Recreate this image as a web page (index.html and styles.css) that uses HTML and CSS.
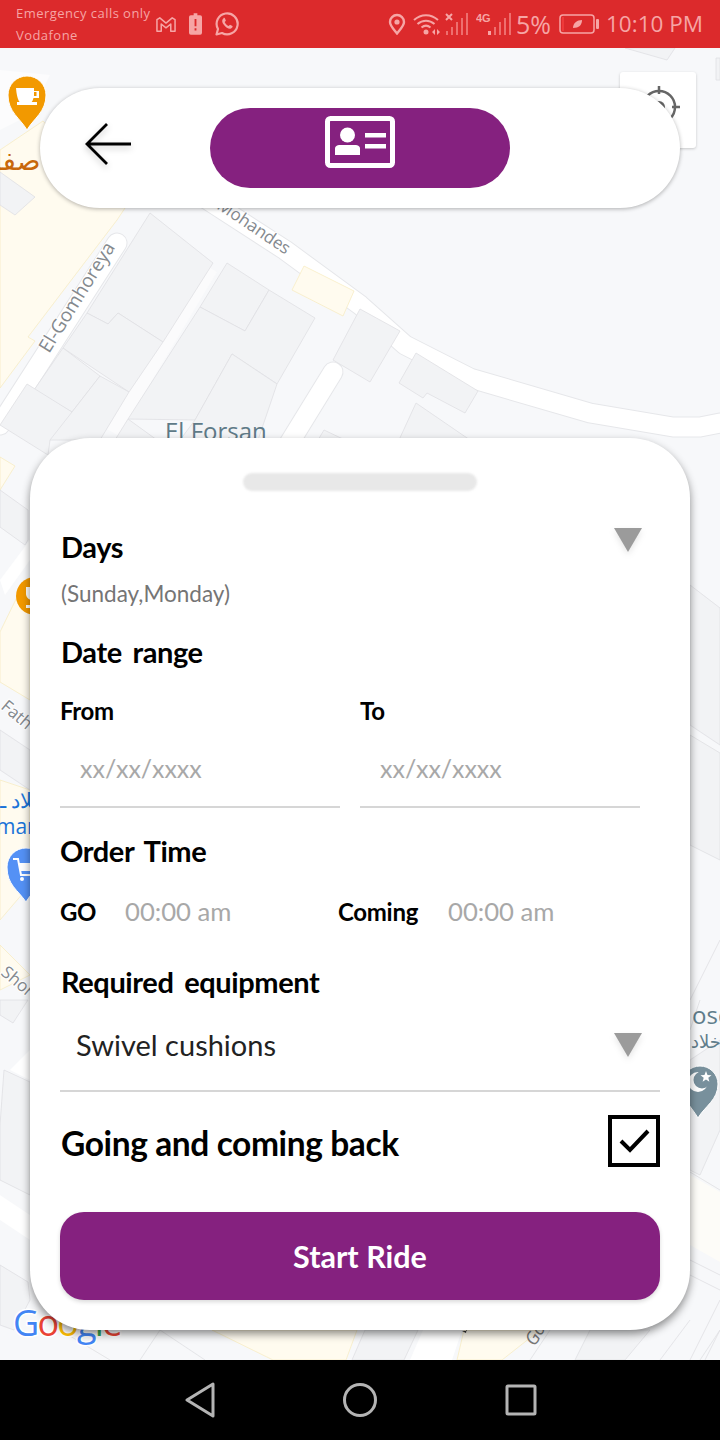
FILE: index.html
```html
<!DOCTYPE html>
<html lang="en">
<head>
<meta charset="utf-8">
<title>Start Ride</title>
<link rel="stylesheet" href="styles.css">
</head>
<body>
<div class="screen">
  <header class="status">
    <div class="carrier"><span>Emergency calls only</span><span>Vodafone</span></div>
    <div class="status-left-icons">
      <svg width="20" height="17" viewBox="0 0 21 17"><path d="M1 3.500 4 1.500 10.500 7 17 1.500 20 3.500V15.500H15.500V8L10.500 12 5.500 8V15.500H1z" fill="none" stroke="#f6a5a5" stroke-width="1.600" stroke-linejoin="round"/></svg>
      <svg width="13" height="22" viewBox="0 0 14 23"><path d="M5 0h4v2h3a2 2 0 0 1 2 2v17a2 2 0 0 1-2 2H2a2 2 0 0 1-2-2V4a2 2 0 0 1 2-2h3z" fill="#f6a5a5"/><path d="M6 6h2v8H6zM6 16h2v2.500H6z" fill="#dc2a2c"/></svg>
      <svg width="24" height="24" viewBox="0 0 24 24"><path d="M1.500 22.500 3 17A10.500 10.500 0 1 1 7 21z" fill="none" stroke="#f6a5a5" stroke-width="2.200" stroke-linejoin="round"/><path d="M8.500 6.500c-2 1.500-1.500 4 .5 6.500s5 4.500 7 3.500c1.500-.8 1.800-2 1.500-2.500l-2.500-1.300-1.300 1.300c-1.500-.5-3.500-2.500-4-4l1.200-1.300-1-2.500c-.5-.4-1.200-.4-1.400-.2z" fill="#f6a5a5"/></svg>
    </div>
    <div class="status-right">
      <svg width="18" height="22" viewBox="0 0 18 22"><path d="M9 20.500C5 15.500 2 12.500 2 9a7 7 0 0 1 14 0c0 3.500-3 6.500-7 11.500z" fill="none" stroke="#f6a5a5" stroke-width="2.400"/><circle cx="9" cy="9" r="2.600" fill="#f6a5a5"/></svg>
      <svg class="wifi" width="28" height="22" viewBox="0 0 28 22"><g fill="none" stroke="#f6a5a5" stroke-width="2"><path d="M1 7c7-6.500 17-6.500 24 0"/><path d="M4.500 11c5-4.500 12-4.500 17 0"/><path d="M8.500 14.500c3-2.500 6-2.500 9 0"/></g><circle cx="13" cy="19" r="2.500" fill="#f6a5a5"/><path d="M19 19l3-3v6zM24 16l3 3-3 3z" fill="#f6a5a5"/></svg>
      <svg width="24" height="24" viewBox="0 0 24 24"><path d="M1 2l6 6M7 2 1 8" stroke="#f6a5a5" stroke-width="2"/><path d="M1 19h2v4H1zM6 15h2v8H6zM11 10h2v13h-2zM16 6h2v17h-2zM21 1h2v22h-2z" fill="#ee6f6f"/></svg>
      <svg class="net" width="36" height="24" viewBox="0 0 36 24"><text x="0" y="10" class="tiny">4G</text><path d="M12 19h3v4h-3z" fill="#f6a5a5"/><path d="M18 15h2v8h-2zM23 10h2v13h-2zM28 6h2v17h-2zM33 1h2v22h-2z" fill="#ee6f6f"/></svg>
      <span class="pct">5%</span>
      <svg class="batt" width="40" height="20" viewBox="0 0 40 20"><rect x="1" y="1" width="34" height="18" rx="3" fill="none" stroke="#f6a5a5" stroke-width="1.500"/><path d="M3 3h2v14H3z" fill="#ee3a3a"/><path d="M14 14c0-5 4-8 9-8 0 5-3 8-9 8z" fill="#f6a5a5"/><rect x="37" y="5" width="3" height="10" rx="1" fill="#f6a5a5"/></svg>
      <span class="clock">10:10 PM</span>
    </div>
  </header>

  <main class="map">
    <svg class="map-art" width="720" height="1312" viewBox="0 48 720 1312">
      <rect x="0" y="48" width="720" height="1312" fill="#f7f8fa"/>
      <path class="bld" d="M625 48h50l-8 12-42-12zM716 58h4v22h-4z"/>
      <path d="M0 70l50 5-20 40-30 15z" fill="#fcfcfd"/>
      <path class="ylw" d="M43 121 125 208 117 220 28 337 35 341 0 388V150z"/>
      <path class="bld" d="M0 172l35 25-20 18-15-10z"/>
      <path class="road" d="M0 425 117 243"/><path class="road-in" d="M0 425 117 243"/>
      <path class="lane" d="M210 268 112 432"/>
      <path class="road" d="M200 195 285 250 360 305 405 345 470 378 590 413 673 427 700 427 720 423"/><path class="road-in" d="M200 195 285 250 360 305 405 345 470 378 590 413 673 427 700 427 720 423"/>
      <path class="road" d="M333 372 285 450"/><path class="road-in" d="M333 372 285 450"/>
      <path class="bld" d="M150 213 213 263 163 342 118 313 108 324 87 313z"/>
      <path class="bld" d="M87 313 108 324 118 313 163 342 129 392 63 348z"/>
      <path class="bld" d="M63 348 100 376 72 412 34 390z"/>
      <path class="bld" d="M100 376 129 392 100 440H50L34 420 72 412z"/>
      <path class="bld" d="M27 384 72 412 50 440 48 455 0 425z"/>
      <path class="bld" d="M227 263 269 290 245 331 200 307z"/>
      <path class="bld" d="M200 307 245 331 269 290 315 318 277 384 232 354 195 420 128 419z"/>
      <path class="bld" d="M232 354 277 384 258 440H180L195 420z"/>
      <path class="bld" d="M128 419 157 440H115z"/>
      <path class="bld" d="M324 430 345 440H318z"/>
      <path class="bld" d="M360 309 400 331 370 382 333 360z"/>
      <path class="bld" d="M416 353 478 391 465 413 427 393 423 398 399 383z"/>
      <path class="bld" d="M416 403 470 440H399z"/>
      <path class="ylw" d="M304 266 354 291 343 316 292 290z"/>

      <!-- left edge -->
      <path class="ylw" d="M0 457 15 466 0 490zM18 595 30 600V700L0 682V632zM0 780 30 790V885L0 920zM0 945 30 975 0 990z"/>
      <path class="bld" d="M0 490 28 510V540L25 545 0 527zM0 730 30 750V790L0 770z"/>
      <path d="M0 580 30 540V560L5 595z" fill="#fff"/>
      <path class="bld" d="M0 1000H28L13 1023 0 1015z"/>
      <path d="M10 1070 30 1050V1080z" fill="#fff"/>
      <path class="bld" d="M4 1070 30 1082V1195L0 1180V1125z"/>
      <path d="M0 1195 30 1215V1240L0 1220z" fill="#fff"/>
      <path class="bld" d="M0 1265 28 1282 30 1300 14 1330 0 1325z"/>

      <!-- right edge -->
      <path class="bld" d="M690 585 720 608V745L690 725zM690 735 720 753V860L690 845z"/>
      <path class="lane-out" d="M690 1000 720 940M700 1000 690 1030"/>
      <path class="bld" d="M690 1060 720 1040V1130L700 1175 690 1170z"/>
      <path class="pale" d="M690 1175 720 1192V1262L690 1245z"/>
      <path class="lane-out" d="M690 1172 720 1190M690 1260 720 1275M690 1275 720 1290M690 1360 720 1300M705 1360 720 1330"/>

      <!-- bottom edge -->
      <path class="ylw" d="M212 1330H357L346 1360H273z"/>
      <path class="lane-out" d="M160 1330 205 1360M140 1360 160 1330M60 1330 110 1360"/>
      <path class="bld" d="M365 1330H418L404 1360H352z"/>
      <path class="ylw" d="M464 1330H540L502 1360H457z"/>
      <path d="M423 1330H462L452 1360H410z" fill="#fff"/>
      <path class="bld" d="M590 1330H650L625 1360H575z"/>
      <path class="lane-out" d="M530 1360 550 1330M660 1360 690 1320M700 1360 720 1330"/>
      <path d="M462 1331h5v-4l-1 6z" fill="#333"/>

      <text class="lbl gom" transform="translate(49 354) rotate(-58)">El-Gomhoreya</text>
      <text class="lbl" transform="translate(216 208) rotate(34)">Mohandes</text>
      <text class="lbl-big" x="165" y="440">El Forsan</text>
      <text class="lbl" transform="translate(0 708) rotate(40)">Fath</text>
      <text class="lbl" transform="translate(0 974) rotate(40)">Shor</text>
      <text class="lbl-blue" x="0" y="808">ـلاد ـ</text>
      <text class="lbl-blue" x="-4" y="834">mark</text>
      <text class="lbl-teal" x="692" y="1024">osc</text>
      <text class="lbl-teal-ar" x="691" y="1048">خلاد</text>
      <text class="lbl-ar" x="-6" y="170">صفا</text>
      <g>
        <path d="M27 130C20 118 8 112 8 95a19 19 0 0 1 38 0c0 17-12 23-19 35z" fill="#f29900" stroke="#fff" stroke-width="1"/>
        <path d="M16 88h18v3h5v7h-5.500c-1 4-3 6-6 6h-4c-4 0-6.500-4-7.500-16zM34 92v4h2.500v-4z" fill="#fff" fill-rule="evenodd"/>
        <rect x="17" y="102" width="20" height="3" fill="#fff"/>
      </g>
      <circle cx="35" cy="596" r="19" fill="#f29900"/>
      <path d="M26 587h18v7c0 4-3 6-6 6h-6c-3 0-6-3-6-6zM26 605h18v3H26z" fill="#fff"/>
      <g>
        <path d="M26 902C18 890 7 885 7 867a19 19 0 0 1 38 0c0 18-12 23-19 35z" fill="#5491f5" stroke="#fff" stroke-width="1"/>
        <path d="M13 859h5l3 16h14" fill="none" stroke="#fff" stroke-width="2"/><path d="M19 863h16v8H20z" fill="#fff"/><circle cx="22" cy="879" r="2" fill="#fff"/>
      </g>
      <g>
        <path d="M698 1118C691 1106 682 1100 682 1084a18 18 0 0 1 36 0c0 16-13 22-20 34z" fill="#78909c" stroke="#fff" stroke-width="1"/>
        <circle cx="698" cy="1082" r="10" fill="#fff"/><circle cx="702" cy="1080" r="8.500" fill="#78909c"/>
        <path d="M706 1071l1.500 4 4 .2-3.200 2.500 1.100 4-3.400-2.300-3.400 2.300 1.100-4-3.200-2.500 4-.2z" fill="#fff"/>
      </g>
      <text class="lbl-go" transform="translate(535 1347) rotate(-60)">Go</text>
      <text class="google" x="13" y="1336"><tspan fill="#4285f4">G</tspan><tspan fill="#ea4335">o</tspan><tspan fill="#fbbc05">o</tspan><tspan fill="#4285f4">g</tspan><tspan fill="#34a853">l</tspan><tspan fill="#ea4335">e</tspan></text>
    </svg>

    <div class="locate">
      <svg width="60" height="60" viewBox="0 0 60 60"><g fill="none" stroke="#666" stroke-width="2.500"><circle cx="29" cy="29" r="16"/><path d="M29 8v8M29 42v8M8 29h8M42 29h8"/></g><circle cx="29" cy="29" r="6" fill="#666"/></svg>
    </div>

    <div class="topbar">
      <svg class="back" width="50" height="44" viewBox="0 0 50 44"><path d="M47 22H3M23 2 3 22l20 20" fill="none" stroke="#000" stroke-width="2.800"/></svg>
      <div class="id-pill">
        <svg width="70" height="52" viewBox="0 0 70 52"><rect x="2.500" y="2.500" width="65" height="47" rx="3" fill="none" stroke="#fff" stroke-width="5"/><circle cx="22.500" cy="19" r="7.500" fill="#fff"/><path d="M10 39v-6c0-3 2-4 5-4h15c3 0 5 1 5 4v6z" fill="#fff"/><path d="M40 17h21v4.500H40zM40 28h21v4.500H40z" fill="#fff"/></svg>
      </div>
    </div>

    <section class="sheet">
      <div class="handle"></div>
      <div class="row-between days">
        <h2 class="title">Days</h2>
        <span class="caret"></span>
      </div>
      <p class="sub">(Sunday,Monday)</p>
      <h2 class="title date-title">Date range</h2>
      <div class="dates">
        <div class="date-col">
          <span class="label">From</span>
          <div class="field">xx/xx/xxxx</div>
        </div>
        <div class="date-col">
          <span class="label">To</span>
          <div class="field">xx/xx/xxxx</div>
        </div>
      </div>
      <h2 class="title order-title">Order Time</h2>
      <div class="times">
        <span class="label go">GO</span><span class="hint go-hint">00:00 am</span>
        <span class="label coming">Coming</span><span class="hint">00:00 am</span>
      </div>
      <h2 class="title equip-title">Required equipment</h2>
      <div class="select">
        <span>Swivel cushions</span>
        <span class="caret"></span>
      </div>
      <div class="row-between round-trip">
        <span class="big">Going and coming back</span>
        <span class="check"><svg width="44" height="44" viewBox="0 0 44 44"><path d="M9 22l9 9 18-19" fill="none" stroke="#000" stroke-width="4"/></svg></span>
      </div>
      <button class="cta">Start Ride</button>
    </section>
  </main>

  <nav class="navbar">
    <svg width="30" height="36" viewBox="0 0 30 36"><path d="M28 2v32L2 18z" fill="none" stroke="#b4b4b4" stroke-width="3" stroke-linejoin="round"/></svg>
    <svg width="36" height="36" viewBox="0 0 36 36"><circle cx="18" cy="18" r="15.500" fill="none" stroke="#b4b4b4" stroke-width="3"/></svg>
    <svg width="32" height="32" viewBox="0 0 32 32"><rect x="2" y="2" width="28" height="28" rx="1" fill="none" stroke="#b4b4b4" stroke-width="3"/></svg>
  </nav>
</div>
</body>
</html>
```

FILE: styles.css
```css
* { box-sizing: border-box; }
html, body { margin: 0; padding: 0; }
body { width: 720px; height: 1440px; overflow: hidden; font-family: "Lato", "Noto Sans", sans-serif; color: #000; }
.screen { width: 720px; height: 1440px; display: flex; flex-direction: column; }

/* status bar */
.status { height: 48px; background: #dc2a2c; display: flex; align-items: center; padding: 0 17px 0 16px; color: #f6a5a5; flex: none; }
.carrier { display: flex; flex-direction: column; width: 140px; font-family: "Open Sans", sans-serif; font-size: 13px; line-height: 22px; letter-spacing: .45px; white-space: nowrap; }
.status-left-icons { display: flex; align-items: center; gap: 13px; }
.status-right { margin-left: auto; display: flex; align-items: center; gap: 4px; }
.wifi { margin-left: 3px; }
.net { margin-left: 3px; }
.batt { margin-left: 4px; }
.tiny { font: 700 11px "Liberation Sans", sans-serif; fill: #f6a5a5; }
.pct, .clock { font-family: "Open Sans", sans-serif; font-size: 22.500px; line-height: 28px; }
.pct { font-size: 25px; }
.clock { margin-left: 3px; }

/* map */
.map { position: relative; flex: 1; display: flex; flex-direction: column; justify-content: space-between; padding: 40px 30px 30px; overflow: hidden; }
.map-art { position: absolute; left: 0; top: 0; }
.bld { fill: #f2f3f5; stroke: #dfe0e3; stroke-width: .8; }
.ylw { fill: #fffbef; stroke: #f8ecc4; stroke-width: .8; }
.pale { fill: #fdfcf8; }
.road { fill: none; stroke: #e6e7ea; stroke-width: 21; stroke-linecap: round; stroke-linejoin: round; }
.road-in { fill: none; stroke: #fff; stroke-width: 19; stroke-linecap: round; stroke-linejoin: round; }
.lane { fill: none; stroke: #fbfbfc; stroke-width: 16; }
.lane-out { fill: none; stroke: #dfe0e3; stroke-width: .8; }
.lbl { font: 17px "Open Sans", sans-serif; fill: #84898e; stroke: #fff; stroke-width: 2px; paint-order: stroke; }
.gom { font-size: 19px; }
.lbl-big { font: 24px "Open Sans", sans-serif; fill: #5f7a87; }
.lbl-blue { font: 21px "Open Sans", "Noto Sans", sans-serif; fill: #1a73d8; }
.lbl-teal { font: 24px "Open Sans", sans-serif; fill: #607d8b; }
.lbl-teal-ar { font: 18px "DejaVu Sans", sans-serif; fill: #607d8b; }
.lbl-ar { font: 28px "DejaVu Sans", sans-serif; fill: #c8680a; }
.lbl-go { font: italic 18px "Open Sans", sans-serif; fill: #777; }
.google { font: 500 36px "Open Sans", sans-serif; letter-spacing: -1.800px; stroke: #fff; stroke-width: 3px; paint-order: stroke; }

.locate { position: absolute; left: 620px; top: 24px; width: 76px; height: 76px; background: #fff; border-radius: 3px; box-shadow: 0 1px 3px rgba(0,0,0,.2); padding: 6px 0 0 10px; }

.topbar { position: relative; height: 120px; margin: 0 10px; background: #fff; border-radius: 60px; box-shadow: 0 1px 4px rgba(0,0,0,.3); display: flex; align-items: center; padding-left: 44px; flex: none; }
.back { margin-top: -8px; filter: drop-shadow(0 3px 3px rgba(0,0,0,.2)); }
.id-pill { margin-left: 76px; width: 300px; height: 80px; border-radius: 40px; background: #85217f; display: flex; align-items: center; justify-content: center; padding-bottom: 12px; }

/* sheet */
.sheet { position: relative; height: 892px; background: #fff; border-radius: 60px; padding: 35px 30px 0; box-shadow: 0 4px 8px rgba(0,0,0,.45); flex: none; }
.handle { width: 234px; height: 18px; margin: 0 auto; border-radius: 9px; background: #e8e8e8; filter: blur(1px); }
.row-between { display: flex; align-items: center; justify-content: space-between; }
.title { margin: 0; font-size: 29px; line-height: 40px; font-weight: 700; padding-left: 1px; letter-spacing: -.4px; word-spacing: 4px; }
.days { margin-top: 36px; height: 40px; }
.caret { width: 0; height: 0; border-left: 14px solid transparent; border-right: 14px solid transparent; border-top: 24px solid #9b9b9b; margin-right: 18px; filter: drop-shadow(0 3px 3px rgba(0,0,0,.1)); }
.days .caret { margin-top: -14px; }
.sub { margin: 11px 0 0; font-size: 22.500px; line-height: 32px; color: #757575; padding-left: 1px; }
.date-title { margin-top: 22px; }
.dates { display: flex; gap: 20px; margin-top: 21px; width: 580px; }
.date-col { flex: 1; }
.label { display: block; font-size: 24px; line-height: 36px; font-weight: 700; letter-spacing: -.3px; }
.field { margin-top: 4px; height: 75px; padding: 13px 0 0 20px; line-height: 44px; font-size: 25px; color: #a8a8a8; border-bottom: 2px solid #d6d6d6; }
.order-title { margin-top: 23px; padding-left: 0; }
.times { display: flex; align-items: center; margin-top: 20px; height: 40px; }
.times .label { padding-top: 2px; }
.go { width: 65px; }
.hint { font-size: 25.700px; color: #a8a8a8; }
.go-hint { width: 213px; }
.coming { width: 110px; }
.equip-title { margin-top: 31px; }
.select { display: flex; align-items: center; justify-content: space-between; margin-top: 23px; height: 67px; padding: 0 0 25px 16px; font-size: 29px; color: #222; border-bottom: 2px solid #d6d6d6; }
.select span:first-child { margin-top: -2px; }
.round-trip { margin-top: 23px; height: 52px; }
.big { font-size: 33.500px; font-weight: 700; line-height: 56px; padding-top: 4px; padding-left: 1px; letter-spacing: -.4px; }
.check { width: 52px; height: 52px; border: 4px solid #000; display: block; }
.check svg { display: block; }
.cta { display: block; margin-top: 45px; width: 600px; height: 88px; border: 0; border-radius: 24px; background: #85217f; color: #fff; font: 700 30.500px "Lato", sans-serif; box-shadow: 0 2px 4px rgba(0,0,0,.15); }

.navbar { height: 80px; background: #000; display: flex; align-items: center; justify-content: center; gap: 127px; padding-left: 2px; flex: none; }
```
